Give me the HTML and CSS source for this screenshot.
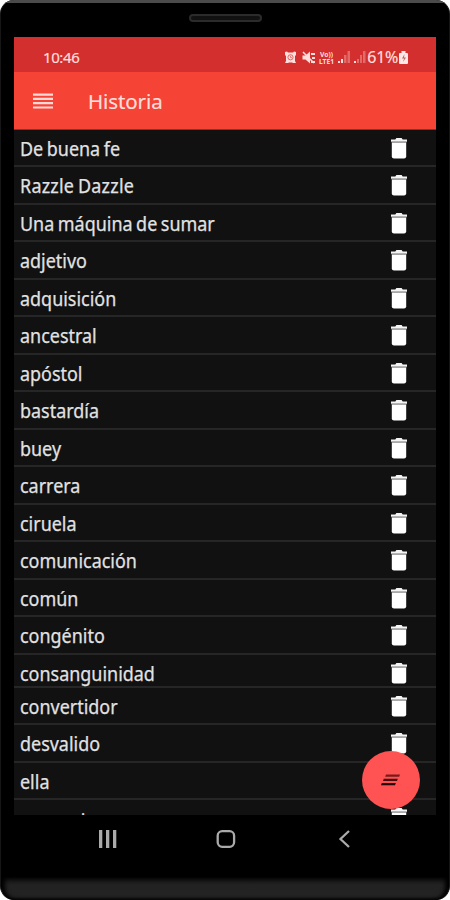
FILE: index.html
```html
<!DOCTYPE html>
<html lang="es">
<head>
<meta charset="utf-8">
<title>Historia</title>
<link rel="stylesheet" href="styles.css">
</head>
<body>
<svg class="defs" width="0" height="0"><defs>
<symbol id="trash" viewBox="0 0 18 22"><path d="M1 2.600h4.300L6.400 1h5.200l1.100 1.600H17v2.200H1z" fill="#f4f4f4"/><path d="M1.600 4.600h14.800v1.200H1.600z" fill="#aaa"/><path d="M1.800 5.800h14.400v13.400a2.200 2.200 0 0 1-2.200 2.200H4a2.200 2.200 0 0 1-2.200-2.200z" fill="#fff"/></symbol>
</defs></svg>
<div class="phone">
<div class="bezel"><span class="speaker"></span></div>
<div class="screen">
<div class="status"><span class="clock">10:46</span>
<svg class="status-icons" width="82" height="16" viewBox="0 0 82 16" fill="#ffdedb">
<path d="M0 2l2-.500 1 1h5l1-1 2 .500v3l-1 1v5l1 2H8l-1-.500H4L3 13H0l1-2V6L0 5z"/><circle cx="5.500" cy="7.300" r="2.600" fill="none" stroke="#d96565"/><path d="M5.500 5.700v2h1.500" fill="none" stroke="#d96565" stroke-width=".8"/>
<path d="M17.500 5.500h3l4.500-4v12l-4.500-4h-3zM26 3h4v2h-4zm1 4h3v2h-3zm-1 4h4v2h-4z"/><path d="M18 2l11 11" stroke="#ffdedb" stroke-width="1.500"/>
<text x="35" y="6.900" font-size="6.500" font-weight="700" textLength="13" lengthAdjust="spacingAndGlyphs">Vo))</text><text x="34" y="13.500" font-size="6.500" font-weight="700" textLength="15" lengthAdjust="spacingAndGlyphs">LTE1</text>
<path d="M53 11h2v2h-2zm3-2h2v4h-2z"/><path d="M59 5h2.500v8H59zm3.500-4H65v12h-2.500z" opacity=".35"/>
<path d="M69 11h2v2h-2z"/><path d="M72 9h2v4h-2zm3-4h2v8h-2zm3-4h2.500v12H78z" opacity=".35"/>
</svg><span class="percent">61%</span>
<svg class="battery" width="9" height="13" viewBox="0 0 9 13"><path d="M2.500 0h4v2H8q1 0 1 1v9q0 1-1 1H1q-1 0-1-1V3q0-1 1-1h1.500z" fill="#ffe9e6"/><path d="M5.500 3L3 7.500h2L4 11l3-4.500H5z" fill="#b56a70"/></svg>
</div>
<header class="toolbar"><svg width="20" height="16" viewBox="0 0 20 16" fill="#ffd9d5"><path d="M0 .500h20v2.200H0zm0 4.300h20v2.200H0zm0 4.300h20v2.200H0zm0 4.300h20v2.200H0z"/></svg><h1>Historia</h1></header>
<ul class="list">
<li><span>De buena fe</span><svg><use href="#trash"/></svg></li>
<li><span class="roomy">Razzle Dazzle</span><svg><use href="#trash"/></svg></li>
<li><span>Una máquina de sumar</span><svg><use href="#trash"/></svg></li>
<li><span>adjetivo</span><svg><use href="#trash"/></svg></li>
<li><span>adquisición</span><svg><use href="#trash"/></svg></li>
<li><span>ancestral</span><svg><use href="#trash"/></svg></li>
<li><span>apóstol</span><svg><use href="#trash"/></svg></li>
<li><span>bastardía</span><svg><use href="#trash"/></svg></li>
<li><span>buey</span><svg><use href="#trash"/></svg></li>
<li><span>carrera</span><svg><use href="#trash"/></svg></li>
<li><span>ciruela</span><svg><use href="#trash"/></svg></li>
<li><span>comunicación</span><svg><use href="#trash"/></svg></li>
<li><span>común</span><svg><use href="#trash"/></svg></li>
<li><span>congénito</span><svg><use href="#trash"/></svg></li>
<li class="short"><span>consanguinidad</span><svg><use href="#trash"/></svg></li>
<li><span>convertidor</span><svg><use href="#trash"/></svg></li>
<li><span>desvalido</span><svg><use href="#trash"/></svg></li>
<li><span>ella</span><svg><use href="#trash"/></svg></li>
<li><span class="last">emancipar</span><svg><use href="#trash"/></svg></li>
</ul>
<button class="fab" aria-label="Borrar"><svg width="20" height="12" viewBox="0 0 20 12"><path d="M5 .500h14l-.800 2.200H4.200z" fill="#761b1d"/><path d="M2.800 4.800h14l-.800 2.200H2z" fill="#4a0b0d"/><path d="M.800 8.900h14l-.800 2.400H0z" fill="#210304"/></svg></button>
</div>
<nav class="nav">
<svg width="18" height="18" viewBox="0 0 18 18" fill="#aaa"><path d="M0 0h3.300v18H0zm7 0h3.300v18H7zm7 0h3.300v18H14z"/></svg>
<svg width="20" height="18" viewBox="0 0 20 18" fill="none" stroke="#aaa" stroke-width="2.300"><rect x="1.700" y="1.200" width="16.400" height="15.600" rx="4.500"/></svg>
<svg width="12" height="18" viewBox="0 0 12 18" fill="none" stroke="#aaa" stroke-width="2.300"><path d="M11 1L2.500 9l8.500 8"/></svg>
</nav>
<div class="chin"></div>
</div>
</body>
</html>
```
FILE: styles.css
```css
* { box-sizing: border-box; }
body { margin: 0; background: #fff; font-family: "Noto Sans", sans-serif; }
.defs { position: absolute; }
.phone {
  width: 450px; height: 900px; overflow: hidden;
  display: flex; flex-direction: column;
  background: #000; border-radius: 14px;
  border-left: 1px solid #161616; border-right: 1px solid #161616;
}
.bezel { height: 37px; border-top: 3px solid #4b4b4b; display: flex; justify-content: center; padding-top: 11px; flex: none; }
.speaker { width: 73px; height: 8px; border-radius: 4px; border: 2px solid #2b2b2b; background: #111; }
.screen { position: relative; height: 778px; width: 422px; margin-left: 13px; flex: none; overflow: hidden; background: #111; }
.status { height: 35px; background: #d32f2f; color: #ffdedb; display: flex; align-items: center; padding: 6px 28px 0 29px; }
.clock { font-size: 15px; line-height: 18px; letter-spacing: -.4px; margin-top: -2px; -webkit-text-stroke: .2px #ffdedb; }
.status-icons { margin-left: auto; }
.percent { font-size: 16px; line-height: 18px; letter-spacing: -.3px; margin: -2px 1px 0 0; -webkit-text-stroke: .2px #ffdedb; }
.toolbar { height: 58px; background: #f54336; display: flex; align-items: center; padding-left: 19px; gap: 35px; color: #ffdedb; border-bottom: 1px solid #9b2c25; }
.toolbar h1 { margin: 1px 0 0; font-size: 20.500px; line-height: 28px; font-weight: 400; letter-spacing: -.1px; -webkit-text-stroke: .2px #ffdedb; }
.list { margin: 0; padding: 0; list-style: none; }
.list li { height: 37.470px; border-bottom: 2px solid #262626; display: flex; justify-content: space-between; padding: 5px 28.500px 0 6px; }
.list .short { height: 33.300px; }
.list span { font-size: 19.500px; line-height: 27px; color: #e2e2e2; transform: scaleX(.92); transform-origin: left; white-space: nowrap; word-spacing: -1.200px; -webkit-text-stroke: .25px #e2e2e2; }
.list .roomy { letter-spacing: .25px; }
.list .last { letter-spacing: .9px; padding-top: 2px; }
.list svg { width: 18px; height: 22px; margin-top: 2px; flex: none; }
.fab { position: absolute; right: 16px; bottom: 6px; width: 58px; height: 58px; border: 0; border-radius: 50%; background: #ff5253; display: flex; align-items: center; justify-content: center; padding: 0; }
.nav { height: 62px; display: flex; justify-content: space-between; padding: 15px 99px 0 98px; }
.nav svg:nth-child(2) { margin-right: 4px; }
.chin { height: 23px; background: linear-gradient(#0d0d0d, #222 35%, #232323 85%, #141414); margin: 0 1px; border-radius: 0 0 13px 13px; box-shadow: inset 3px 0 4px #000, inset -3px 0 4px #000; }
```
